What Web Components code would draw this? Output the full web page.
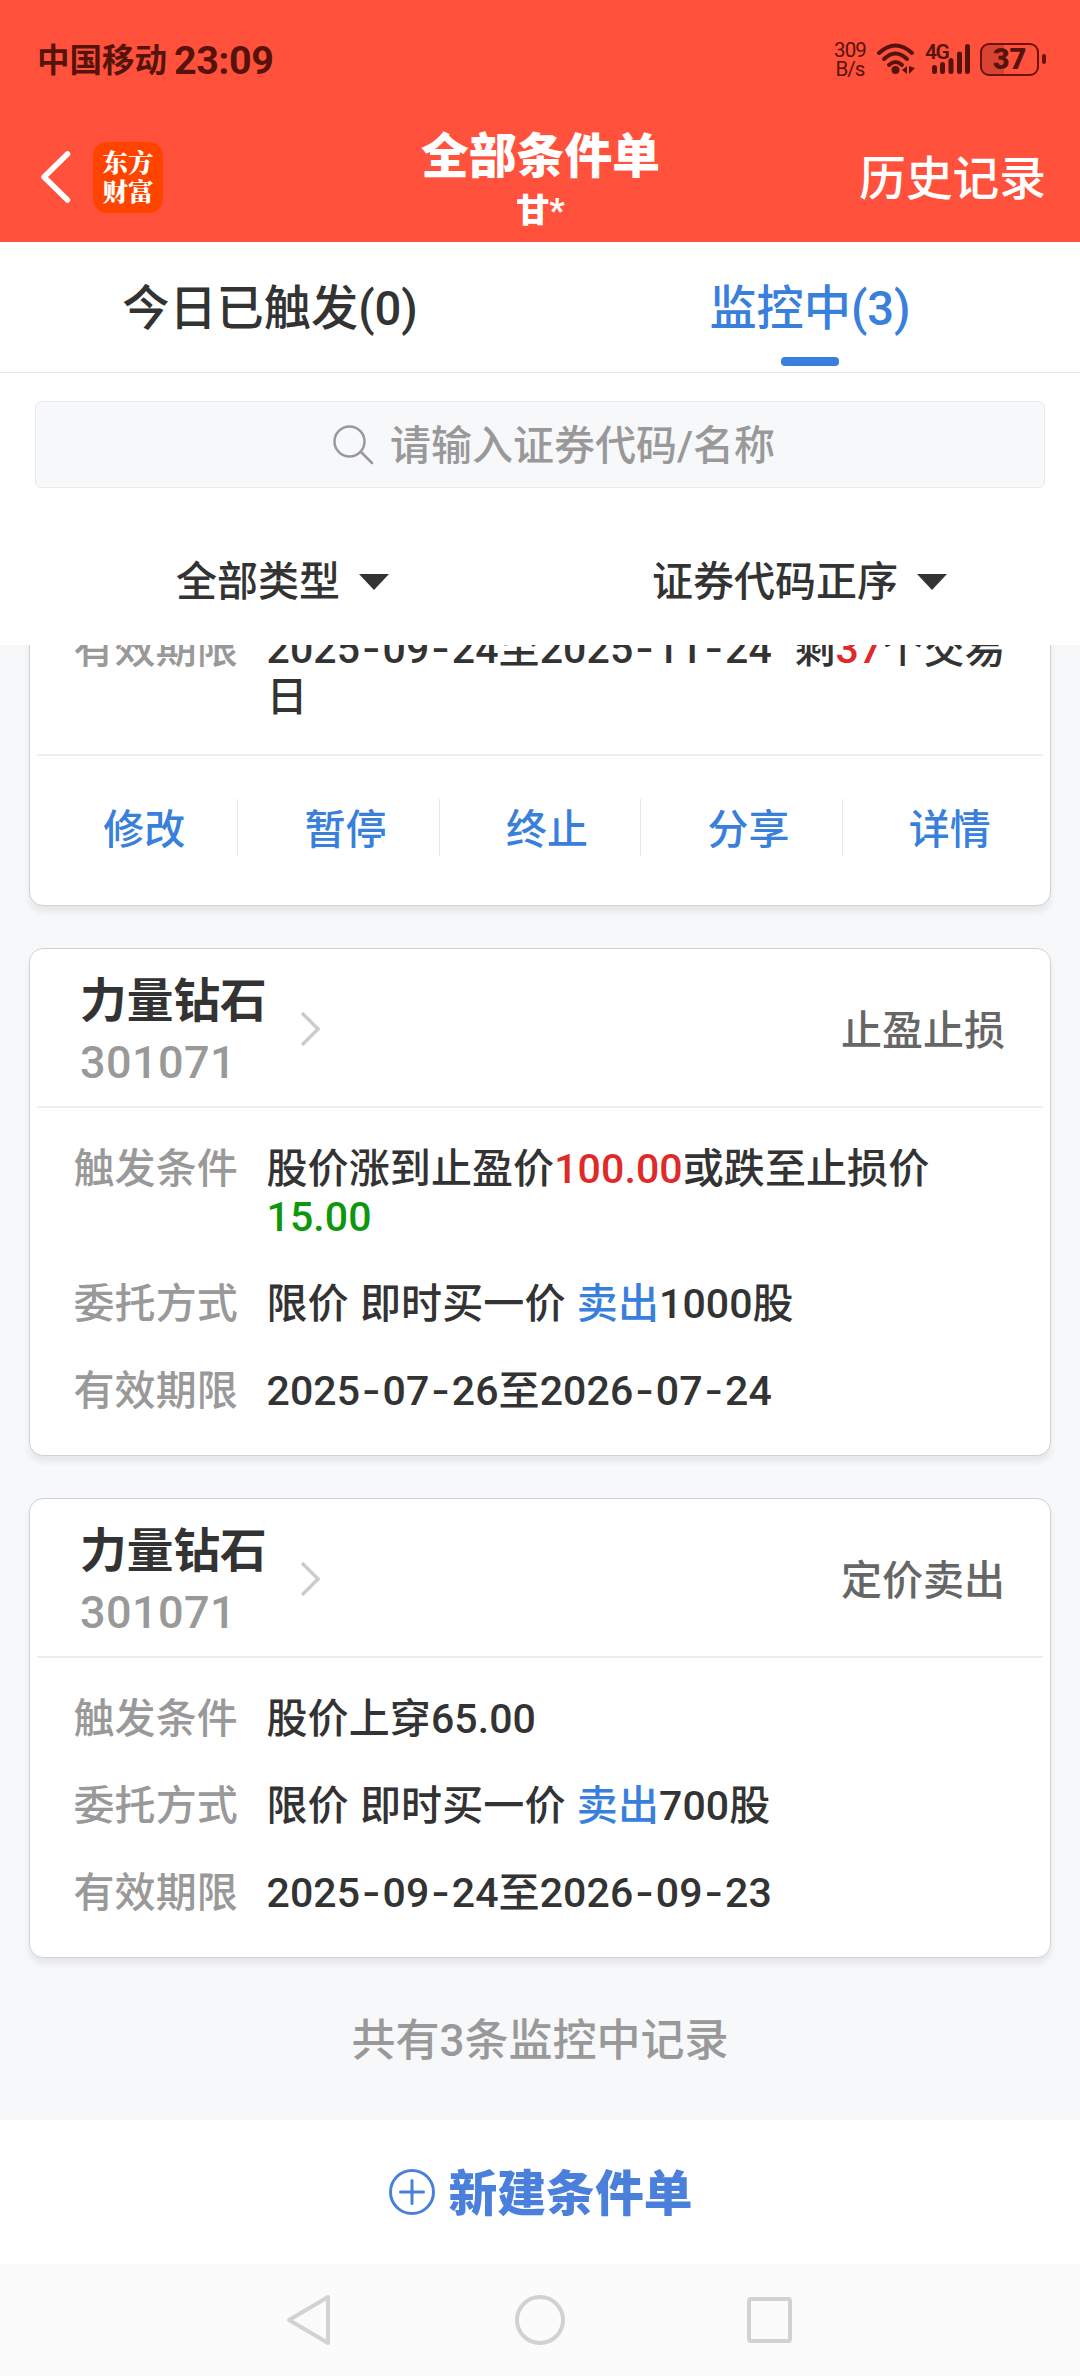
<!DOCTYPE html>
<html lang="zh-CN">
<head>
<meta charset="utf-8">
<title>全部条件单</title>
<style>
  body {
    margin: 0;
    background: #fff;
  }
</style>
</head>
<body>
<order-app></order-app>

<script>
class StatusBar extends HTMLElement {
  connectedCallback() {
    this.attachShadow({ mode: 'open' });
    this.shadowRoot.innerHTML = `
      <style>
        :host {
          display: flex;
          justify-content: space-between;
          align-items: center;
          height: 118px;
          padding: 0 34px 0 37px;
          color: #55130c;
        }
        .left, .right {
          display: flex;
          align-items: center;
        }
        .carrier {
          font-size: 32.5px;
          font-weight: 700;
          margin-bottom: 4px;
        }
        .time {
          font-size: 39.5px;
          font-weight: 700;
          letter-spacing: -0.5px;
          margin: 2px 0 0 7px;
        }
        .speed {
          font-size: 20.5px;
          line-height: 19px;
          letter-spacing: -0.9px;
          text-align: center;
          width: 34px;
          margin-top: 2px;
        }
        svg { display: block; }
        .wifi { margin-left: 9px; }
        .signal {
          position: relative;
          margin-left: 9px;
        }
        .signal span {
          position: absolute;
          left: 0;
          top: -1px;
          font-size: 21px;
          line-height: 20px;
          font-weight: 600;
          letter-spacing: -1.5px;
        }
        .battery {
          width: 55px;
          height: 29px;
          border: 2px solid #6c1309;
          border-radius: 9px;
          background: linear-gradient(90deg, #d94432 40%, transparent 40%);
          font-size: 29px;
          line-height: 29px;
          font-weight: 900;
          text-align: center;
          margin-left: 9px;
        }
        .tip {
          width: 4px;
          height: 10px;
          border-radius: 2px;
          background: #6c1309;
          margin-left: 3px;
        }
      </style>
      <div class="left">
        <span class="carrier">中国移动</span>
        <span class="time">23:09</span>
      </div>
      <div class="right">
        <div class="speed">309<br>B/s</div>
        <svg class="wifi" width="40" height="32" viewBox="0 0 40 32" fill="none" stroke="#55130c" stroke-width="4" stroke-linecap="round">
          <path d="M3 10Q19.500-5 36 10"/>
          <path d="M8 16Q19.500 5 31 16"/>
          <path d="M13 22Q19.500 16 26 22"/>
          <circle cx="19.500" cy="27" r="4" fill="#55130c" stroke="none"/>
          <path d="M31 23v8l-5-4zM33 23v8l6-6z" fill="#55130c" stroke="none"/>
        </svg>
        <div class="signal">
          <svg width="46" height="32" viewBox="0 0 46 32" stroke="#55130c" stroke-width="5" stroke-linecap="round">
            <path d="M9.500 24.500v4M17.500 21.500v7M26 17.500v11M34.500 11v17.500M42.500 3.500v25"/>
          </svg>
          <span>4G</span>
        </div>
        <div class="battery">37</div>
        <div class="tip"></div>
      </div>
    `;
  }
}

class TitleBar extends HTMLElement {
  connectedCallback() {
    this.attachShadow({ mode: 'open' });
    this.shadowRoot.innerHTML = `
      <style>
        :host {
          display: grid;
          grid-template-columns: 1fr auto 1fr;
          height: 124px;
          padding: 0 34px 0 40px;
          color: #fff;
        }
        .left {
          display: flex;
          align-items: center;
          gap: 22px;
          height: 118px;
        }
        .logo {
          display: flex;
          flex-direction: column;
          align-items: center;
          justify-content: center;
          width: 70px;
          height: 71px;
          border-radius: 14px;
          background: #ff4400;
          font: 900 25.5px/29px "Noto Serif CJK SC", "Noto Sans CJK SC", serif;
          box-sizing: border-box;
          padding-bottom: 2px;
        }
        .mid {
          text-align: center;
          margin-right: 5px;
        }
        .title {
          font-size: 47.8px;
          line-height: 56px;
          font-weight: 900;
          margin-top: 11px;
        }
        .sub {
          font-size: 33px;
          line-height: 38px;
          font-weight: 900;
          margin-top: 7px;
        }
        .history {
          font-size: 46.7px;
          line-height: 122px;
          font-weight: 500;
          text-align: right;
        }
      </style>
      <div class="left">
        <svg width="31" height="54" viewBox="0 0 31 54" fill="none" stroke="#fff" stroke-width="5.500" stroke-linecap="round" stroke-linejoin="round">
          <path d="M27.500 4L4 27l23.500 23"/>
        </svg>
        <div class="logo"><span>东方</span><span>财富</span></div>
      </div>
      <div class="mid">
        <div class="title">全部条件单</div>
        <div class="sub">甘*</div>
      </div>
      <div class="history">历史记录</div>
    `;
  }
}

class TabItem extends HTMLElement {
  connectedCallback() {
    this.attachShadow({ mode: 'open' });
    this.shadowRoot.innerHTML = `
      <style>
        :host {
          display: flex;
          flex-direction: column;
          align-items: center;
          flex: 1;
          font-size: 47.2px;
          font-weight: 500;
          line-height: 60px;
          padding-top: 37px;
        }
        :host([active]) { color: #3880dc; }
        :host([active])::after {
          content: '';
          width: 58px;
          height: 9px;
          border-radius: 4px;
          background: #3880dc;
          margin-top: 18px;
        }
      </style>
      <slot></slot>
    `;
  }
}

class SearchBox extends HTMLElement {
  connectedCallback() {
    this.attachShadow({ mode: 'open' });
    this.shadowRoot.innerHTML = `
      <style>
        :host {
          display: flex;
          justify-content: center;
          align-items: center;
          gap: 16px;
          height: 85px;
          margin: 28px 35px 0;
          padding-left: 28px;
          border: 1px solid #e9ebee;
          border-radius: 6px;
          background: #f7f8fa;
          color: #999;
          font-size: 41px;
          font-weight: 500;
        }
        div { padding-bottom: 5px; }
      </style>
      <svg width="41" height="40" viewBox="0 0 41 40" fill="none" stroke="#999" stroke-width="2.500" stroke-linecap="round">
        <circle cx="16.500" cy="16.500" r="15"/>
        <path d="M28 27l11 11"/>
      </svg>
      <div><slot></slot></div>
    `;
  }
}

class FilterItem extends HTMLElement {
  connectedCallback() {
    this.attachShadow({ mode: 'open' });
    this.shadowRoot.innerHTML = `
      <style>
        :host {
          display: flex;
          align-items: center;
          gap: 19px;
          height: 60px;
          font-size: 41px;
          font-weight: 500;
          line-height: 60px;
        }
      </style>
      <slot></slot>
      <svg width="30" height="16" viewBox="0 0 30 16"><path d="M0 0h30L15 16z" fill="#333"/></svg>
    `;
  }
}

class OrderCard extends HTMLElement {
  connectedCallback() {
    const name = this.getAttribute('name');
    this.attachShadow({ mode: 'open' });
    this.shadowRoot.innerHTML = `
      <style>
        :host {
          display: block;
          margin: 0 29px 42px;
          border: 1px solid #cfd1d4;
          border-radius: 14px;
          background: #fff;
          box-shadow: 0 6px 6px rgba(0, 0, 0, 0.07);
          box-sizing: border-box;
        }
        .head {
          display: flex;
          align-items: center;
          height: 159px;
          margin: 0 7px;
          padding: 0 38px 0 43px;
          border-bottom: 2px solid #ededef;
          box-sizing: border-box;
        }
        .name {
          font-size: 46.7px;
          line-height: 58px;
          font-weight: 700;
          margin-top: 12px;
        }
        .code {
          font-size: 45px;
          line-height: 65px;
          letter-spacing: 0.4px;
          color: #999;
          font-weight: 500;
        }
        .arrow { margin: 2px 0 0 33px; }
        .type {
          margin-left: auto;
          color: #666;
          font-size: 41px;
          font-weight: 500;
          padding-bottom: 2px;
        }
        .rows {
          display: grid;
          gap: 39px;
          padding: 37px 0 40px;
        }
        :host([scrolled]) .rows { padding-bottom: 33px; }
      </style>
      ${name ? `
      <div class="head">
        <div>
          <div class="name">${name}</div>
          <div class="code">${this.getAttribute('code')}</div>
        </div>
        <svg class="arrow" width="22" height="36" viewBox="0 0 22 36" fill="none" stroke="#ccc" stroke-width="3.500"><path d="M2 2l16 16L2 34"/></svg>
        <div class="type">${this.getAttribute('type')}</div>
      </div>` : ''}
      <div class="rows"><slot></slot></div>
      <slot name="actions"></slot>
    `;
  }
}

class OrderRow extends HTMLElement {
  connectedCallback() {
    this.attachShadow({ mode: 'open' });
    this.shadowRoot.innerHTML = `
      <style>
        :host {
          display: flex;
          padding: 0 24px 0 43.5px;
          font-size: 41px;
          line-height: 48px;
          font-weight: 500;
          letter-spacing: 0.1px;
          word-spacing: 1px;
        }
        .label {
          flex: none;
          width: 193px;
          color: #999;
        }
        ::slotted(.red) { color: #e02a2a; }
        ::slotted(.green) { color: #0d970d; }
        ::slotted(.blue) { color: #3880dc; }
        /* wide date hyphen, kept from stretching the line box */
        ::slotted(.dash) {
          font-family: Inter, sans-serif;
          line-height: 0;
          padding: 0 1.7px;
        }
      </style>
      <div class="label">${this.getAttribute('label')}</div>
      <div><slot></slot></div>
    `;
  }
}

class ActionBar extends HTMLElement {
  connectedCallback() {
    const items = this.getAttribute('items').split(',');
    this.attachShadow({ mode: 'open' });
    this.shadowRoot.innerHTML = `
      <style>
        :host {
          display: flex;
          margin: 0 7px;
          padding: 43px 0 49px;
          border-top: 2px solid #ededef;
        }
        div {
          flex: 1;
          padding-left: 14px;
          font-size: 41px;
          height: 57px;
          line-height: 62px;
          font-weight: 500;
          text-align: center;
          color: #3880dc;
        }
        div + div { border-left: 1px solid #e6e6e8; }
      </style>
      ${items.map(item => `<div>${item}</div>`).join('')}
    `;
  }
}

class NewOrderButton extends HTMLElement {
  connectedCallback() {
    this.attachShadow({ mode: 'open' });
    this.shadowRoot.innerHTML = `
      <style>
        :host {
          display: flex;
          align-items: center;
          justify-content: center;
          gap: 13px;
          height: 144px;
          background: #fff;
          color: #4a80dc;
          font-size: 48.8px;
          font-weight: 900;
        }
        div { padding-bottom: 6px; }
      </style>
      <svg width="48" height="48" viewBox="0 0 48 48" fill="none" stroke="#4a80dc" stroke-width="3">
        <circle cx="24" cy="24" r="21.500"/>
        <path d="M24 12.500v23M12.500 24h23" stroke-linecap="round"/>
      </svg>
      <div><slot></slot></div>
    `;
  }
}

class NavBar extends HTMLElement {
  connectedCallback() {
    this.attachShadow({ mode: 'open' });
    this.shadowRoot.innerHTML = `
      <style>
        :host {
          display: flex;
          align-items: center;
          justify-content: space-between;
          height: 112px;
          padding: 0 285px 0 284px;
          background: #fbfbfb;
        }
      </style>
      <svg width="52" height="52" viewBox="0 0 52 52" fill="none" stroke="#d2d2d2" stroke-width="4" stroke-linejoin="round"><path d="M44 3v46L5 26z"/></svg>
      <svg width="52" height="52" viewBox="0 0 52 52" fill="none" stroke="#d2d2d2" stroke-width="4"><circle cx="26" cy="26" r="23"/></svg>
      <svg width="52" height="52" viewBox="0 0 52 52" fill="none" stroke="#d2d2d2" stroke-width="4"><rect x="6" y="5" width="41" height="42" rx="2"/></svg>
    `;
  }
}

const date = text => text.replaceAll('-', '<span class="dash">-</span>');

class OrderApp extends HTMLElement {
  connectedCallback() {
    this.attachShadow({ mode: 'open' });
    this.shadowRoot.innerHTML = `
      <style>
        :host {
          display: flex;
          flex-direction: column;
          width: 1080px;
          height: 2376px;
          overflow: hidden;
          color: #333;
          font-family: Roboto, "Noto Sans CJK SC", sans-serif;
        }
        header {
          height: 242px;
          background: #ff513b;
        }
        .tabs {
          display: flex;
          height: 130px;
          border-bottom: 1px solid #e9e9eb;
        }
        .filters {
          display: flex;
          justify-content: space-between;
          padding: 64px 133px 0 176px;
          height: 93px;
        }
        /* the list is scrolled, so the first card runs under the filters */
        .list {
          flex: 1;
          display: flex;
          flex-direction: column;
          justify-content: flex-end;
          overflow: hidden;
          min-height: 0;
          background: #f7f8fa;
        }
        .total {
          font-size: 44px;
          line-height: 60px;
          color: #999;
          text-align: center;
          font-weight: 500;
          padding: 11px 0 49px;
        }
      </style>
      <header>
        <status-bar></status-bar>
        <title-bar></title-bar>
      </header>
      <div class="tabs">
        <tab-item>今日已触发(0)</tab-item>
        <tab-item active>监控中(3)</tab-item>
      </div>
      <search-box>请输入证券代码/名称</search-box>
      <div class="filters">
        <filter-item>全部类型</filter-item>
        <filter-item>证券代码正序</filter-item>
      </div>
      <div class="list">
        <order-card scrolled>
          <order-row label="有效期限">${date('2025-09-24至2025-11-24')}&nbsp; 剩<span class="red">37</span>个交易日</order-row>
          <action-bar slot="actions" items="修改,暂停,终止,分享,详情"></action-bar>
        </order-card>
        <order-card name="力量钻石" code="301071" type="止盈止损">
          <order-row label="触发条件">股价涨到止盈价<span class="red">100.00</span>或跌至止损价<span class="green">15.00</span></order-row>
          <order-row label="委托方式">限价 即时买一价 <span class="blue">卖出</span>1000股</order-row>
          <order-row label="有效期限">${date('2025-07-26至2026-07-24')}</order-row>
        </order-card>
        <order-card name="力量钻石" code="301071" type="定价卖出">
          <order-row label="触发条件">股价上穿65.00</order-row>
          <order-row label="委托方式">限价 即时买一价 <span class="blue">卖出</span>700股</order-row>
          <order-row label="有效期限">${date('2025-09-24至2026-09-23')}</order-row>
        </order-card>
        <div class="total">共有3条监控中记录</div>
      </div>
      <new-order-button>新建条件单</new-order-button>
      <nav-bar></nav-bar>
    `;
  }
}

customElements.define('status-bar', StatusBar);
customElements.define('title-bar', TitleBar);
customElements.define('tab-item', TabItem);
customElements.define('search-box', SearchBox);
customElements.define('filter-item', FilterItem);
customElements.define('order-card', OrderCard);
customElements.define('order-row', OrderRow);
customElements.define('action-bar', ActionBar);
customElements.define('new-order-button', NewOrderButton);
customElements.define('nav-bar', NavBar);
customElements.define('order-app', OrderApp);
</script>
</body>
</html>
